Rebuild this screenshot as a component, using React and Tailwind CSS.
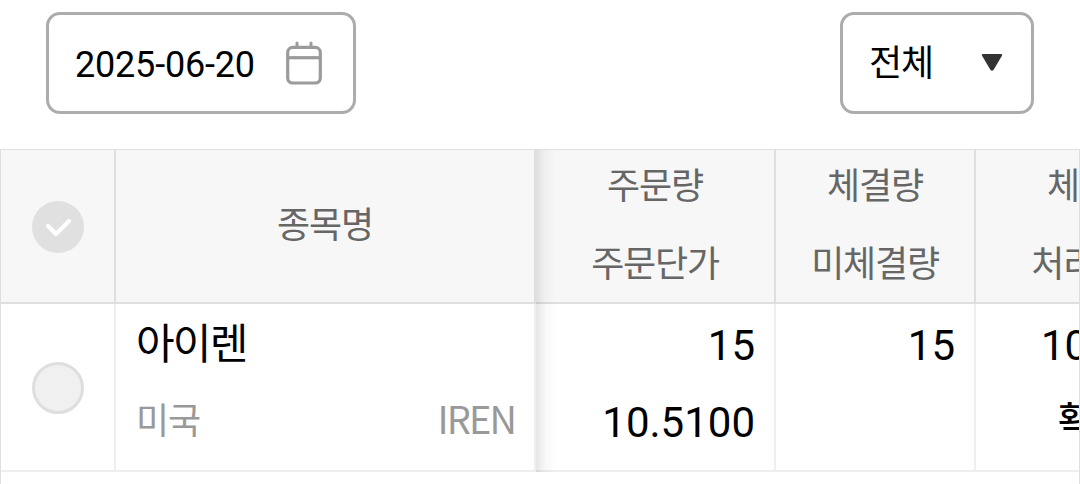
import clsx from 'clsx'

const COLUMNS = [
  { id: 'qty', head: ['주문량', '주문단가'], cells: ['15', '10.5100'], width: 'w-[240px]' },
  { id: 'filled', head: ['체결량', '미체결량'], cells: ['15', ''], width: 'w-[200px]' },
]

function CalendarIcon() {
  return (
    <svg width="36" height="44" viewBox="0 0 36 44" fill="none" stroke="#9b9b9b" className="shrink-0">
      <rect x="1.7" y="6.3" width="32.6" height="35.7" rx="5" strokeWidth="3.2" />
      <path d="M2 16.7h32" strokeWidth="3.2" />
      <path d="M11 2v4M25 2v4" strokeWidth="3" strokeLinecap="round" />
    </svg>
  )
}

function HeadText({ children }) {
  return <span className="text-[36px] leading-[78px] tracking-[-1.2px] text-[#666] whitespace-nowrap">{children}</span>
}

function NumberText({ children }) {
  return <span className="h-[77px] text-[42px] leading-[77px] text-black whitespace-nowrap">{children}</span>
}

function Filters() {
  return (
    <div className="h-[149px] shrink-0 flex items-start justify-between px-[46px] pt-3">
      <button
        type="button"
        className="w-[310px] h-[102px] flex items-center justify-between border-3 border-[#acacac] rounded-[14px] pl-[26px] pr-[31px]"
      >
        <span className="text-[36px] leading-[42px] tracking-[-0.2px] pt-[3px] text-black">2025-06-20</span>
        <CalendarIcon />
      </button>
      <button
        type="button"
        className="w-[194px] h-[102px] flex items-center justify-between border-3 border-[#acacac] rounded-[14px] pl-[26px] pr-7"
      >
        <span className="text-[36px] leading-[42px] tracking-[-1.2px] pt-px text-black">전체</span>
        <svg width="22" height="18" viewBox="0 0 22 18" fill="#333">
          <path d="M2.2 0h17.6q2.2 0 1 2l-8 13.4q-1.8 2.6-3.6 0l-8-13.4q-1.2-2 1-2z" />
        </svg>
      </button>
    </div>
  )
}

function TableHead() {
  return (
    <div className="h-[154px] shrink-0 flex bg-[#f7f7f7] border-b-2 border-[#dfdfdf]">
      <div className="w-[115px] shrink-0 flex items-center justify-center pt-0.5 border-r-2 border-[#dfdfdf]">
        <svg width="52" height="52" viewBox="0 0 52 52" fill="none">
          <circle cx="26" cy="26" r="26" fill="#e0e0e0" />
          <path d="M16 25l8 8 13-13" stroke="#fff" strokeWidth="4.2" strokeLinecap="round" strokeLinejoin="round" />
        </svg>
      </div>
      <div className="w-[420px] shrink-0 flex items-center justify-center pb-px border-r-2 border-[#dfdfdf]">
        <HeadText>종목명</HeadText>
      </div>
      {COLUMNS.map((col) => (
        <div key={col.id} className={clsx(col.width, 'shrink-0 flex flex-col items-center border-r-2 border-[#dfdfdf]')}>
          <div className="-mt-0.5 flex flex-col items-center">
            {col.head.map((label) => (
              <HeadText key={label}>{label}</HeadText>
            ))}
          </div>
        </div>
      ))}
      <div className="w-[238px] shrink-0 flex flex-col items-center">
        <div className="-mt-0.5 flex flex-col items-center">
          <HeadText>체결가</HeadText>
          <HeadText>처리상태</HeadText>
        </div>
      </div>
    </div>
  )
}

function OrderRow() {
  return (
    <div className="h-[168px] shrink-0 flex border-b-2 border-[#efefef]">
      <div className="w-[115px] shrink-0 flex items-center justify-center pt-0.5 border-r-2 border-[#efefef]">
        <span className="size-[52px] rounded-full bg-[#f0f0f0] border-3 border-[#dedede]" />
      </div>
      <div className="w-[420px] shrink-0 flex flex-col pl-5 pr-[19px] pt-0.5 border-r-2 border-[#efefef]">
        <span className="h-[77px] text-[42px] leading-[78px] tracking-[-1.8px] text-black">아이렌</span>
        <div className="flex justify-between text-[36px] leading-[78px] tracking-[-1.2px] text-[#999]">
          <span>미국</span>
          <span className="-mt-1 text-[38px] tracking-[-1.9px] font-['Noto_Sans_CJK_KR',sans-serif]">IREN</span>
        </div>
      </div>
      {COLUMNS.map((col) => (
        <div key={col.id} className={clsx(col.width, 'shrink-0 flex flex-col items-end pt-[3px] pr-[19px] border-r-2 border-[#efefef]')}>
          {col.cells.map((value, i) => (
            <NumberText key={i}>{value}</NumberText>
          ))}
        </div>
      ))}
      <div className="w-[240px] shrink-0 flex flex-col pt-[3px] pl-[65px]">
        <NumberText>10.5100</NumberText>
        <span className="pl-[17px] text-[36px] leading-[75px] font-medium tracking-[-1.2px] text-black">확인</span>
      </div>
    </div>
  )
}

export default function App() {
  return (
    <div className="w-[1080px] h-[484px] flex flex-col overflow-hidden bg-white font-['Roboto','Noto_Sans_CJK_KR',sans-serif]">
      <Filters />
      <div className="relative flex-1 flex flex-col overflow-hidden border border-b-0 border-[#dfdfdf]">
        <TableHead />
        <OrderRow />
        {/* shadow cast by the pinned columns */}
        <div className="absolute left-[535px] top-0 w-5 h-[322px] bg-linear-to-r from-black/10 via-black/3 via-45% to-transparent" />
      </div>
    </div>
  )
}
